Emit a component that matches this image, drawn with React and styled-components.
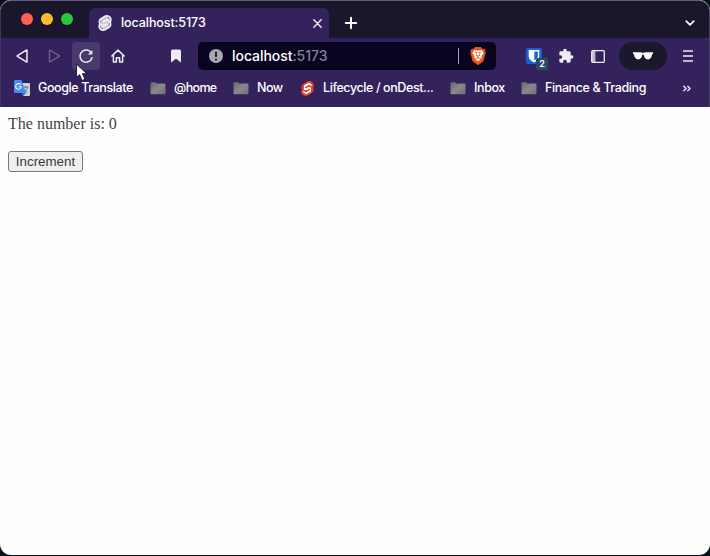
import React from "react";
import styled, { createGlobalStyle } from "styled-components";
import { SiBrave, SiSvelte } from "react-icons/si";
import { MdExtension } from "react-icons/md";

const GlobalStyle = createGlobalStyle`
  * { box-sizing: border-box; }
  body { margin: 0; background: #081018; overflow: hidden; }
`;

const Window = styled.main`
  display: flex;
  flex-direction: column;
  width: 710px;
  height: 555px;
  overflow: hidden;
  border-radius: 11px;
  background: #fefefe;
`;

const Chrome = styled.header`
  height: 107px;
  background: #34225d;
  color: #fff;
  font-family: Inter, "Liberation Sans", sans-serif;
  border: solid #655f75;
  border-width: 1px 1px 0;
  border-left-color: #3c3459;
  border-right-color: #4a4167;
  border-radius: 11px 11px 0 0;
  overflow: hidden;
`;

const TabStrip = styled.div`
  display: flex;
  align-items: flex-end;
  height: 37px;
  background: #1a172c;
`;

const Lights = styled.div`
  display: flex;
  gap: 8px;
  width: 88px;
  padding: 0 0 13px 20px;
`;

const Light = styled.span`
  width: 12px;
  height: 12px;
  border-radius: 50%;
  background: ${(p) => p.$color};
`;

const Tab = styled.div`
  display: flex;
  align-items: center;
  width: 240px;
  height: 30px;
  padding: 0 7px 0 8px;
  border-radius: 6px 6px 0 0;
  background: #34225d;
`;

const Label = styled.span`
  font-size: ${(p) => p.$size || 12.5}px;
  font-weight: 500;
  line-height: 18px;
  letter-spacing: ${(p) => p.$spacing || 0}px;
  white-space: nowrap;
`;

const TabTitle = styled(Label)`
  flex: 1;
  margin-left: 8px;
`;

const NewTab = styled.button`
  display: flex;
  width: 14px;
  height: 30px;
  margin-left: 15px;
  padding: 0;
  align-items: center;
  border: 0;
  background: none;
`;

const TabSearch = styled(NewTab)`
  width: 12px;
  margin: 0 13px 0 auto;
`;

const Toolbar = styled.div`
  display: flex;
  align-items: center;
  height: 36px;
  padding: 0 7px;
`;

const IconButton = styled.button`
  position: relative;
  display: grid;
  place-items: center;
  flex: none;
  width: 28px;
  height: 28px;
  margin: 0 ${(p) => (p.$gap === undefined ? 4 : p.$gap)}px 0 0;
  padding: 0;
  border: 0;
  border-radius: 4px;
  background: ${(p) => (p.$hover ? "#493a6d" : "transparent")};
`;

const Pointer = styled.svg`
  position: absolute;
  left: 3px;
  top: 21px;
  z-index: 2;
`;

const Badge = styled.span`
  position: absolute;
  left: 16px;
  top: 16px;
  width: 12px;
  height: 12px;
  border-radius: 2px;
  background: #2b4d63;
  color: #fff;
  font: 600 9px/12px Inter, sans-serif;
  text-align: center;
`;

const AddressBar = styled.div`
  display: flex;
  align-items: center;
  width: 298px;
  height: 28px;
  margin-right: 24px;
  padding: 0 9px 0 11px;
  border-radius: 5px;
  background: #08031f;
`;

const Address = styled(Label)`
  flex: 1;
  margin-left: 9px;
`;

const Port = styled.span`
  color: #85809b;
`;

const Divider = styled.span`
  width: 1px;
  height: 16px;
  margin-right: 10px;
  background: #aaa6b3;
`;

const PrivateBadge = styled.div`
  display: grid;
  place-items: center;
  width: 48px;
  height: 28px;
  margin: 0 7px 0 3px;
  border-radius: 14px;
  background: #1b172d;
`;

const Bookmarks = styled.nav`
  display: flex;
  align-items: center;
  height: 28px;
  padding-left: 13px;
`;

const Bookmark = styled.div`
  display: flex;
  align-items: center;
  width: ${(p) => p.$width}px;
  gap: 8px;
  flex: none;
`;

const Page = styled.section`
  flex: 1;
  padding: 8px;
  font-family: "Liberation Serif", serif;
  font-size: 16px;
  color: #444448;
`;

const Message = styled.p`
  margin: 0 0 18px;
  line-height: 18px;
`;

const Increment = styled.button`
  display: block;
  width: 75px;
  height: 21px;
  padding: 0;
  border: 1px solid #77777a;
  border-radius: 3px;
  background: #efefef;
  color: #38383b;
  font: 13.33px/18px "Liberation Sans", sans-serif;
`;

const Folder = () => (
  <svg width="16" height="16" viewBox="0 0 16 16">
    <defs>
      <linearGradient id="folder" x1="0" y1="0" x2="1" y2="1">
        <stop stopColor="#666469" />
        <stop offset=".5" stopColor="#8b898d" />
        <stop offset="1" stopColor="#6f6d70" />
      </linearGradient>
    </defs>
    <path d="M.5 3.2q0-1 1-1H5l1.3 1.3h8.2q1 0 1 1v8.8q0 1-1 1h-13q-1 0-1-1z" fill="url(#folder)" />
  </svg>
);

const Svelte = ({ body, line, size = 15 }) => (
  <svg width={size} height={size} viewBox="0 0 16 16">
    <path d="M4.2 4.2 9.5 1.6l3.2 2.2-1 8-5.2 2.6-3.2-2.2z" fill={line} />
    <SiSvelte size={16} color={body} />
  </svg>
);

const Translate = () => (
  <svg width="16" height="16" viewBox="0 0 16 16">
    <path d="M6 3h9q1 0 1 1v11q0 1-1 1H9z" fill="#d1d3d8" />
    <path d="M8.4 7.2h6.2M11.4 5.7v1.5m2.2 0c-.5 2.6-1.9 4.1-4 5.1m0-3.8c.7 1.5 2 2.9 3.7 3.7" stroke="#6b7482" fill="none" />
    <path d="M1 0h6.5L12 13H1q-1 0-1-1V1q0-1 1-1z" fill="#468df0" />
    <path d="m7.8 13 1.4 3 2.8-3z" fill="#356ac2" />
    <path d="M6.6 4.7a2.8 2.8 0 1 0 .6 2.1H4.7" stroke="#eef5ff" strokeWidth="1.1" fill="none" />
  </svg>
);

const LineIcon = ({ d, color = "#eeeaf4", width = 1.5, size = 16 }) => (
  <svg width={size} height={size} viewBox="0 0 16 16" fill="none" stroke={color} strokeWidth={width} strokeLinecap="round" strokeLinejoin="round">
    <path d={d} />
  </svg>
);

const Brave = () => (
  <svg width="18" height="18" viewBox="0 0 18 18">
    <path d="m5 3 4 .2L13 3l2 3-2 6-4 3.5L5 12 3 6z" fill="#fff" />
    <SiBrave size={18} color="#f25119" />
  </svg>
);

const Bitwarden = () => (
  <svg width="16" height="16" viewBox="0 0 16 16">
    <rect width="16" height="16" rx="2" fill="#175ddc" />
    <path d="M2.7 2h10.6v6.3c0 2.8-2.1 4.6-5.3 6.1-3.2-1.5-5.3-3.3-5.3-6.1z" fill="#fff" />
    <path d="M8.4 3.5h3.4v4.8c0 1.8-1.3 3.1-3.4 4.2z" fill="#175ddc" />
  </svg>
);

const BOOKMARKS = [
  { title: "Google Translate", width: 136, icon: <Translate />, spacing: -0.4 },
  { title: "@home", width: 83, icon: <Folder />, spacing: -0.65 },
  { title: "Now", width: 67, icon: <Folder />, spacing: -0.5 },
  { title: "Lifecycle / onDest...", width: 150, icon: <Svelte body="#f04421" line="#fff" />, spacing: -0.4 },
  { title: "Inbox", width: 71, icon: <Folder />, spacing: -0.4 },
  { title: "Finance & Trading", width: 162, icon: <Folder />, spacing: -0.38 },
];

export default function App() {
  return (
    <>
      <GlobalStyle />
      <Window>
        <Chrome>
          <TabStrip>
            <Lights>
              <Light $color="#ff5f57" />
              <Light $color="#febb2e" />
              <Light $color="#28c840" />
            </Lights>
            <Tab>
              <Svelte body="#f1eff5" line="#cbc6d2" size={16} />
              <TabTitle $spacing={-0.08}>localhost:5173</TabTitle>
              <LineIcon d="m1.5 1.5 13 13m0-13-13 13" width={2.5} size={9} />
            </Tab>
            <NewTab aria-label="New tab">
              <LineIcon d="M8 2v12M2 8h12" color="#fff" width={2.2} size={14} />
            </NewTab>
            <TabSearch aria-label="Search tabs">
              <LineIcon d="m3 5.5 5 5 5-5" color="#fff" width={2.2} size={12} />
            </TabSearch>
          </TabStrip>
          <Toolbar>
            <IconButton aria-label="Back">
              <LineIcon d="M13 2.4v11.2q0 .6-.6.2L3.4 8.4q-.6-.4 0-.8l9-5.4q.6-.4.6.2z" />
            </IconButton>
            <IconButton aria-label="Forward">
              <LineIcon color="#75668f" width={1.3} d="M3.5 2.4v11.2q0 .6.6.2l9-5.4q.6-.4 0-.8l-9-5.4q-.6-.4-.6.2z" />
            </IconButton>
            <IconButton $hover aria-label="Reload">
              <svg width="16" height="16" viewBox="0 0 16 16">
                <path d="M14 9.8A6.1 6.1 0 1 1 12.3 3.6" fill="none" stroke="#eeeaf4" strokeWidth="1.5" strokeLinecap="round" />
                <path d="M14.3 2v3.9q0 .5-.5.5H9.9z" fill="#eeeaf4" />
              </svg>
              <Pointer width="13" height="19" viewBox="0 0 13 19">
                <path d="M1.5 1.2v13.2l3.1-2.8 2.5 5.9 2.8-1.2-2.5-5.6h4.4z" fill="#fff" stroke="#27222f" />
              </Pointer>
            </IconButton>
            <IconButton $gap={30} aria-label="Home">
              <LineIcon d="M1.8 8 8 2.1 14.2 8M3.4 6.8V14h3V9.8h3.2V14h3V6.8" />
            </IconButton>
            <IconButton $gap={8} aria-label="Bookmark">
              <svg width="12" height="14" viewBox="0 0 12 14">
                <path d="M1 2q0-1.5 1.5-1.5h7Q11 .5 11 2v11.5L6 9.8l-5 3.7z" fill="#eeeaf4" />
              </svg>
            </IconButton>
            <AddressBar>
              <svg width="14" height="14" viewBox="0 0 14 14">
                <circle cx="7" cy="7" r="7" fill="#aaa6b3" />
                <path d="M7 2.8v5.3M7 9.8v1.6" stroke="#10091f" strokeWidth="1.7" />
              </svg>
              <Address $size={14} $spacing={-0.05}>localhost<Port>:5173</Port></Address>
              <Divider />
              <Brave />
            </AddressBar>
            <IconButton aria-label="Bitwarden">
              <Bitwarden />
              <Badge>2</Badge>
            </IconButton>
            <IconButton aria-label="Extensions">
              <MdExtension size={16} color="#eeeaf4" />
            </IconButton>
            <IconButton aria-label="Side panel">
              <svg width="14" height="13" viewBox="0 0 14 13">
                <rect x=".7" y=".7" width="12.6" height="11.6" rx="1" fill="none" stroke="#eeeaf4" strokeWidth="1.3" />
                <path d="M1 1h3.4v11H1z" fill="#eeeaf4" opacity=".75" />
              </svg>
            </IconButton>
            <PrivateBadge>
              <svg width="20" height="8" viewBox="0 0 20 8" fill="#fff">
                <path d="M0 .3h8l2 .6 2-.6h8v1.5l-1 .8c-.3 3.2-1.8 4.8-4 4.8-2.6 0-4-2-4.2-4.6h-1.6C9 5.4 7.6 7.4 5 7.4 2.8 7.4 1.3 5.8 1 2.6l-1-.8z" />
              </svg>
            </PrivateBadge>
            <IconButton $gap={0} aria-label="Menu">
              <svg width="12" height="12" viewBox="0 0 12 12">
                <path d="M1 1h10M1 6h10M1 11h10" stroke="#eeeaf4" strokeWidth="1.5" />
              </svg>
            </IconButton>
          </Toolbar>
          <Bookmarks>
            {BOOKMARKS.map((b) => (
              <Bookmark key={b.title} $width={b.width}>
                {b.icon}
                <Label $spacing={b.spacing}>{b.title}</Label>
              </Bookmark>
            ))}
            <LineIcon d="m1.5 4 4 4-4 4m7-8 4 4-4 4" width={2.4} size={9} />
          </Bookmarks>
        </Chrome>
        <Page>
          <Message>The number is: 0</Message>
          <Increment>Increment</Increment>
        </Page>
      </Window>
    </>
  );
}
